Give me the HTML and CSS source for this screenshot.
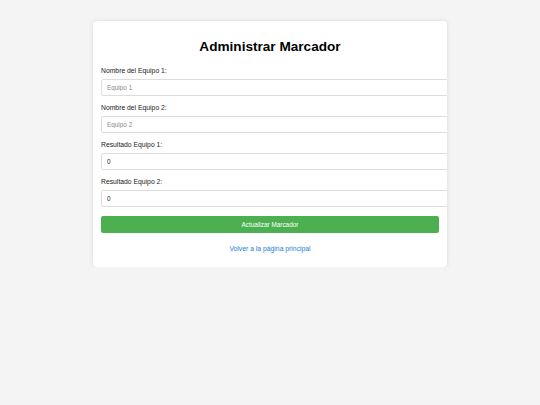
FILE: index.html
```html
<!DOCTYPE html>
<html lang="es">
<head>
  <meta charset="UTF-8">
  <meta name="viewport" content="width=device-width, initial-scale=1.0">
  <title>Administrar Marcador</title>
  <link rel="stylesheet" href="styles.css">
</head>
<body>
  <div class="container">
    <h1>Administrar Marcador</h1>
    <form class="form">
      <label for="equipo1">Nombre del Equipo 1:</label>
      <input type="text" id="equipo1" placeholder="Equipo 1">

      <label for="equipo2">Nombre del Equipo 2:</label>
      <input type="text" id="equipo2" placeholder="Equipo 2">

      <label for="resultado1">Resultado Equipo 1:</label>
      <input type="number" id="resultado1" value="0">

      <label for="resultado2">Resultado Equipo 2:</label>
      <input type="number" id="resultado2" value="0">

      <button type="button" class="btn">Actualizar Marcador</button>
    </form>
    <a href="#" class="back">Volver a la página principal</a>
  </div>
</body>
</html>
```

FILE: styles.css
```css
*{padding:0;margin:0}
body {
  background: #f4f4f4;
  font-family: "Liberation Sans", Arial, sans-serif;
  padding-top: 21px;
}
.container{
  width: 338px;
  margin: 0 auto;
  padding: 9px 8px 14px;
  background: #fff;
  border-radius: 4px;
  box-shadow: 0 0 5px rgba(0,0,0,0.1);
  overflow: hidden;
}
h1{
  font-size: 13.6px;
  line-height: 17px;
  text-align: center;
  color: #000;
  margin: 8px 0 11px;
}
.form label{
  display: block;
  font-size: 6.8px;
  line-height: 9px;
  color: #222;
  margin-bottom: 4px;
}
.form input{
  display: block;
  width: 100%;
  height: 9px;
  padding: 3px 5px;
  border: 1px solid #ddd;
  border-radius: 2px;
  font-family: inherit;
  font-size: 6.4px;
  color: #222;
  margin-bottom: 7px;
  -moz-appearance: textfield;
}
.form input::placeholder{
  color: #8a8a8a;
}
.form input::-webkit-inner-spin-button,
.form input::-webkit-outer-spin-button{
  -webkit-appearance: none;
  margin: 0;
}
.btn{
  display: block;
  width: 100%;
  height: 17px;
  margin-top: 9px;
  border: none;
  border-radius: 2px;
  background: #4caf50;
  color: #fff;
  font-family: inherit;
  font-size: 6.4px;
}
.back{
  display: block;
  margin-top: 11px;
  text-align: center;
  font-size: 6.8px;
  line-height: 9px;
  color: #1a7fe0;
  text-decoration: none;
}
```
